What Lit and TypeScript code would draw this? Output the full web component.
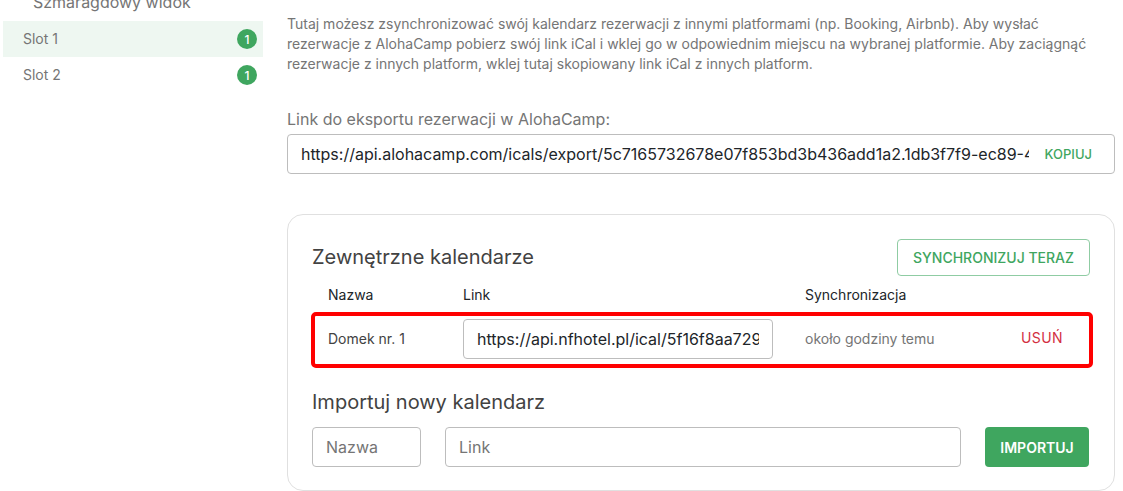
import { LitElement, html, css } from 'lit';
import { customElement } from 'lit/decorators.js';

const SLOTS = [
  { name: 'Slot 1', count: 1, active: true },
  { name: 'Slot 2', count: 1, active: false },
];

const EXPORT_URL =
  'https://api.alohacamp.com/icals/export/5c7165732678e07f853bd3b436add1a2.1db3f7f9-ec89-4a1e-9d3c-7a2f6b1c8e11';
const IMPORT_URL = 'https://api.nfhotel.pl/ical/5f16f8aa7293c1d04e5b';

@customElement('app-root')
export class AppRoot extends LitElement {
  static styles = css`
    :host {
      display: block;
      height: 491px;
      overflow: hidden;
      background: #fff;
      font-family: Inter, 'Liberation Sans', sans-serif;
      color: #757575;
    }
    * {
      box-sizing: border-box;
    }
    .page {
      display: flex;
      align-items: flex-start;
      margin-top: -14px;
    }
    .sidebar {
      width: 260px;
      margin-left: 3px;
      flex: none;
    }
    .group-title {
      height: 35px;
      padding: 6px 0 0 30px;
      font-size: 16px;
      line-height: 20px;
    }
    .slot {
      display: flex;
      align-items: center;
      justify-content: space-between;
      height: 36px;
      padding: 0 6px 0 20px;
      font-size: 14px;
    }
    .slot span:first-child {
      margin-top: -1px;
    }
    .slot.active {
      background: #eef7f1;
    }
    .badge {
      width: 20px;
      height: 20px;
      border-radius: 50%;
      background: #3fa65f;
      color: #fff;
      font-size: 12px;
      font-weight: 500;
      display: flex;
      align-items: center;
      justify-content: center;
    }
    .content {
      width: 828px;
      margin-left: 24px;
      padding-top: 28px;
      flex: none;
    }
    .intro {
      margin: 0;
      max-width: 810px;
      font-size: 14px;
      line-height: 20px;
    }
    .export-label {
      margin-top: 33px;
      font-size: 16px;
      line-height: 24px;
    }
    .export-box {
      display: flex;
      align-items: center;
      height: 40px;
      margin-top: 3px;
      padding: 0 22px 0 13px;
      border: 1px solid #bdbdbd;
      border-radius: 4px;
    }
    input {
      min-width: 0;
      border: 0;
      outline: 0;
      padding: 0;
      background: none;
      font: inherit;
      font-size: 16px;
      color: #212529;
    }
    input::placeholder {
      color: #757575;
      opacity: 1;
    }
    .export-box input {
      flex: 1;
    }
    .copy {
      margin-left: 16px;
      font-size: 13px;
      font-weight: 500;
      color: #3fa65f;
    }
    .card {
      margin-top: 40px;
      height: 277px;
      padding: 24px;
      border: 1px solid #e0e0e0;
      border-radius: 16px;
    }
    .card-head {
      display: flex;
      align-items: center;
      justify-content: space-between;
      height: 37px;
    }
    .card-head h2 {
      margin-top: -2px;
    }
    h2 {
      margin: 0;
      font-size: 20px;
      font-weight: 400;
      line-height: 28px;
      color: #424242;
    }
    .sync {
      width: 193px;
      height: 37px;
      border: 1px solid #8fcca3;
      border-radius: 4px;
      font-size: 14px;
      font-weight: 500;
      color: #3fa65f;
      display: flex;
      align-items: center;
      justify-content: center;
    }
    .cols {
      display: grid;
      grid-template-columns: 135px 310px 32px 216px auto;
      align-items: center;
    }
    .cols > :nth-child(3) {
      grid-column: 4;
    }
    .head {
      margin-top: 6px;
      height: 24px;
      padding-left: 16px;
      font-size: 14px;
      color: #212529;
    }
    .row {
      height: 48px;
      margin: 10px 1px 0 3px;
      padding: 0 0 2px 13px;
      font-size: 14px;
      outline: 4px solid #f00;
      border-radius: 1px;
    }
    .row > span {
      margin-top: -2px;
    }
    .row .name {
      color: #424242;
    }
    .field {
      height: 40px;
      border: 1px solid #bdbdbd;
      border-radius: 4px;
      padding: 0 13px;
      display: flex;
      align-items: center;
      background: #fff;
    }
    .field input {
      width: 100%;
    }
    .row .remove {
      font-size: 14px;
      letter-spacing: 0.4px;
      color: #d32f3f;
      margin-top: -3px;
    }
    .import-title {
      margin-top: 24px;
    }
    .import-row {
      display: flex;
      gap: 24px;
      margin: 11px 1px 0 0;
    }
    .import-name {
      width: 109px;
      flex: none;
    }
    .import-link {
      flex: 1;
    }
    .import-btn {
      width: 104px;
      height: 40px;
      flex: none;
      border-radius: 4px;
      background: #3fa65f;
      color: #fff;
      font-size: 14px;
      font-weight: 600;
      display: flex;
      align-items: center;
      justify-content: center;
    }
  `;

  render() {
    return html`
      <div class="page">
        <aside class="sidebar">
          <div class="group-title">Szmaragdowy widok</div>
          ${SLOTS.map(
            (s) => html`
              <div class="slot ${s.active ? 'active' : ''}">
                <span>${s.name}</span>
                <span class="badge">${s.count}</span>
              </div>
            `
          )}
        </aside>
        <main class="content">
          <p class="intro">
            Tutaj możesz zsynchronizować swój kalendarz rezerwacji z innymi platformami (np. Booking, Airbnb). Aby wysłać
            rezerwacje z AlohaCamp pobierz swój link iCal i wklej go w odpowiednim miejscu na wybranej platformie. Aby zaciągnąć
            rezerwacje z innych platform, wklej tutaj skopiowany link iCal z innych platform.
          </p>
          <div class="export-label">Link do eksportu rezerwacji w AlohaCamp:</div>
          <div class="export-box">
            <input .value=${EXPORT_URL} readonly />
            <span class="copy">KOPIUJ</span>
          </div>
          <section class="card">
            <div class="card-head">
              <h2>Zewnętrzne kalendarze</h2>
              <div class="sync">SYNCHRONIZUJ TERAZ</div>
            </div>
            <div class="cols head">
              <span>Nazwa</span>
              <span>Link</span>
              <span>Synchronizacja</span>
            </div>
            <div class="cols row">
              <span class="name">Domek nr. 1</span>
              <div class="field"><input .value=${IMPORT_URL} readonly /></div>
              <span>około godziny temu</span>
              <span class="remove">USUŃ</span>
            </div>
            <h2 class="import-title">Importuj nowy kalendarz</h2>
            <div class="import-row">
              <div class="field import-name"><input placeholder="Nazwa" /></div>
              <div class="field import-link"><input placeholder="Link" /></div>
              <div class="import-btn">IMPORTUJ</div>
            </div>
          </section>
        </main>
      </div>
    `;
  }
}
